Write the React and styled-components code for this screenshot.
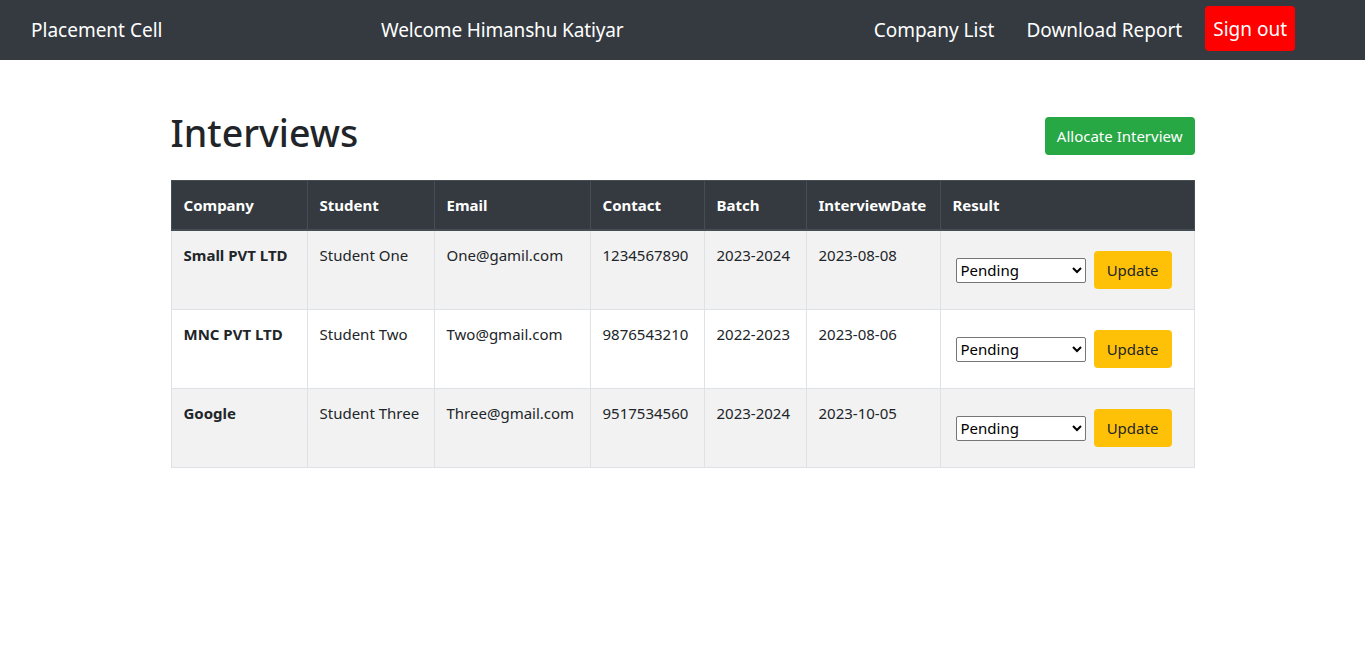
import styled, { createGlobalStyle } from "styled-components";

const GlobalStyle = createGlobalStyle`
  body {
    margin: 0;
    font-family: "Noto Sans", "Open Sans", sans-serif;
    color: #212529;
    background: #fff;
  }
`;

const interviews = [
  { company: "Small PVT LTD", student: "Student One", email: "One@gamil.com", contact: "1234567890", batch: "2023-2024", date: "2023-08-08" },
  { company: "MNC PVT LTD", student: "Student Two", email: "Two@gmail.com", contact: "9876543210", batch: "2022-2023", date: "2023-08-06" },
  { company: "Google", student: "Student Three", email: "Three@gmail.com", contact: "9517534560", batch: "2023-2024", date: "2023-10-05" },
];

const columns = [
  { label: "Company", width: 136 },
  { label: "Student", width: 127 },
  { label: "Email", width: 156 },
  { label: "Contact", width: 114 },
  { label: "Batch", width: 102 },
  { label: "InterviewDate", width: 134 },
  { label: "Result", width: 254 },
];

function App() {
  return (
    <>
      <GlobalStyle />
      <Navbar>
        <Brand>Placement Cell</Brand>
        <Welcome>Welcome Himanshu Katiyar</Welcome>
        <NavLinks>
          <NavLink>Company List</NavLink>
          <NavLink>Download Report</NavLink>
          <SignOut>Sign out</SignOut>
        </NavLinks>
      </Navbar>

      <Container>
        <HeadingRow>
          <Title>Interviews</Title>
          <AllocateButton>Allocate Interview</AllocateButton>
        </HeadingRow>

        <Table>
          <colgroup>
            {columns.map(c => (
              <col key={c.label} style={{ width: c.width }} />
            ))}
          </colgroup>
          <thead>
            <tr>
              {columns.map(c => (
                <HeadCell key={c.label}>{c.label}</HeadCell>
              ))}
            </tr>
          </thead>
          <tbody>
            {interviews.map((row, i) => (
              <Row key={row.company} $striped={i % 2 === 0}>
                <RowHead>{row.company}</RowHead>
                <Cell>{row.student}</Cell>
                <Cell>{row.email}</Cell>
                <Cell>{row.contact}</Cell>
                <Cell>{row.batch}</Cell>
                <Cell>{row.date}</Cell>
                <Cell>
                  <ResultForm>
                    <ResultSelect defaultValue="Pending">
                      <option>Pending</option>
                      <option>Pass</option>
                      <option>Fail</option>
                      <option>On Hold</option>
                      <option>Didn't Attempt</option>
                    </ResultSelect>
                    <UpdateButton>Update</UpdateButton>
                  </ResultForm>
                </Cell>
              </Row>
            ))}
          </tbody>
        </Table>
      </Container>
    </>
  );
}

export default App;

const Navbar = styled.nav`
  height: 60px;
  background: #343a40;
  display: flex;
  align-items: center;
  padding: 0 70px 0 31px;
  color: #fff;
  font-size: 19px;
`;

const Brand = styled.span`
  width: 350px;
`;

const Welcome = styled.span`
  letter-spacing: -0.15px;
`;

const NavLinks = styled.div`
  margin-left: auto;
  display: flex;
  align-items: center;
  gap: 32px;
`;

const NavLink = styled.span`
  color: #fff;
`;

const SignOut = styled.button`
  border: none;
  background: #ff0000;
  color: #fff;
  font: inherit;
  height: 45px;
  padding: 0 8px;
  margin-left: -9px;
  margin-top: -3px;
  border-radius: 4px;
`;

const Container = styled.main`
  width: 1024px;
  margin: 0 auto;
  padding-top: 49px;
`;

const HeadingRow = styled.div`
  display: flex;
  justify-content: space-between;
  align-items: flex-start;
  margin-bottom: 23px;
`;

const Title = styled.h1`
  margin: 0;
  font-size: 37.5px;
  font-weight: 500;
  line-height: 48px;
`;

const AllocateButton = styled.button`
  margin-top: 8px;
  height: 38px;
  padding: 0 12px;
  border: none;
  border-radius: 4px;
  background: #28a745;
  color: #fff;
  font-family: inherit;
  font-size: 15px;
`;

const Table = styled.table`
  width: 100%;
  table-layout: fixed;
  border-collapse: collapse;
  font-size: 15px;
  line-height: 24px;
`;

const HeadCell = styled.th`
  background: #343a40;
  color: #fff;
  text-align: left;
  font-weight: 700;
  padding: 12px;
  border: 1px solid #454d55;
  border-bottom-width: 2px;
`;

const Row = styled.tr`
  background: ${p => (p.$striped ? "#f2f2f2" : "#fff")};
`;

const Cell = styled.td`
  padding: 12px;
  vertical-align: top;
  border: 1px solid #dee2e6;
  white-space: nowrap;
`;

const RowHead = styled(Cell).attrs({ as: "th" })`
  text-align: left;
  font-weight: 700;
`;

const ResultForm = styled.div`
  display: flex;
  align-items: center;
  gap: 8px;
  margin: 8px 0 8px 3px;
`;

const ResultSelect = styled.select`
  width: 130px;
  height: 25px;
  font-family: inherit;
  font-size: 15px;
  color: #000;
  background: #fff;
  border: 1px solid #767676;
  border-radius: 2px;
`;

const UpdateButton = styled.button`
  height: 38px;
  width: 78px;
  border: none;
  border-radius: 4px;
  background: #ffc107;
  color: #212529;
  font-family: inherit;
  font-size: 15px;
`;
